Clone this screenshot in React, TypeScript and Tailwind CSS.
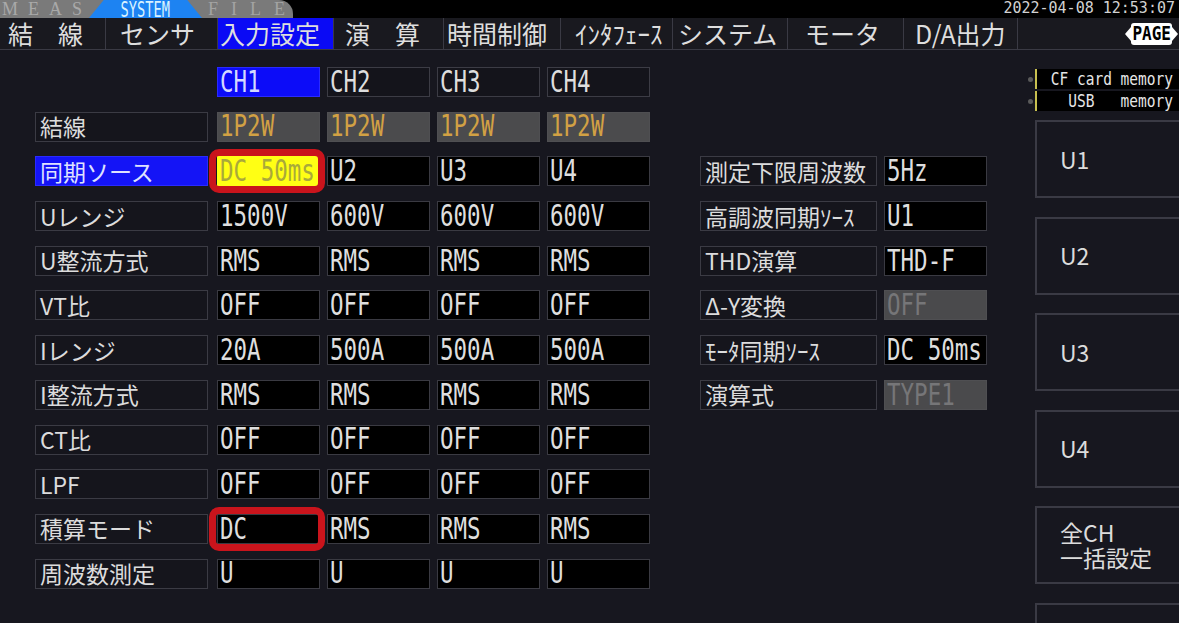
import React from "react";

const MONO = "font-['DejaVu_Sans_Mono','Noto_Sans_CJK_JP',monospace]";
const JP = "font-['Noto_Sans_CJK_JP','Noto_Sans',sans-serif]";

type Cell = { text: string; tone?: "black" | "fixed" | "dim" | "yellow" | "blue" | "head"; ring?: boolean };
type Row = { label: string; selected?: boolean; cells: Cell[]; side?: { label: string; value: Cell } };

const menu = [
  { text: "結　線", cls: "w-[106px] pl-[8px]" },
  { text: "センサ", cls: "w-[112px] pl-[14px]" },
  { text: "入力設定", cls: "w-[116px] pl-[2px] bg-[#0a0af5] text-[#d6dcff]" },
  { text: "演　算", cls: "w-[110px] pl-[11px]" },
  { text: "時間制御", cls: "w-[117px] pl-[3px]" },
  { text: "ｲﾝﾀﾌｪｰｽ", cls: "w-[112px] pl-[14px]" },
  { text: "システム", cls: "w-[115px] pl-[5px]" },
  { text: "モータ", cls: "w-[116px] pl-[17px]" },
  { text: "D/A出力", cls: "w-[114px] pl-[11px]" },
];

const four = (t: string, tone: Cell["tone"] = "black"): Cell[] => [
  { text: t, tone },
  { text: t, tone },
  { text: t, tone },
  { text: t, tone },
];

const rows: Row[] = [
  { label: "結線", cells: four("1P2W", "fixed") },
  {
    label: "同期ソース",
    selected: true,
    cells: [{ text: "DC 50ms", tone: "yellow", ring: true }, { text: "U2" }, { text: "U3" }, { text: "U4" }],
    side: { label: "測定下限周波数", value: { text: "5Hz" } },
  },
  {
    label: "Uレンジ",
    cells: [{ text: "1500V" }, { text: "600V" }, { text: "600V" }, { text: "600V" }],
    side: { label: "高調波同期ｿｰｽ", value: { text: "U1" } },
  },
  { label: "U整流方式", cells: four("RMS"), side: { label: "THD演算", value: { text: "THD-F" } } },
  { label: "VT比", cells: four("OFF"), side: { label: "Δ-Y変換", value: { text: "OFF", tone: "dim" } } },
  {
    label: "Iレンジ",
    cells: [{ text: "20A" }, { text: "500A" }, { text: "500A" }, { text: "500A" }],
    side: { label: "ﾓｰﾀ同期ｿｰｽ", value: { text: "DC 50ms" } },
  },
  { label: "I整流方式", cells: four("RMS"), side: { label: "演算式", value: { text: "TYPE1", tone: "dim" } } },
  { label: "CT比", cells: four("OFF") },
  { label: "LPF", cells: four("OFF") },
  { label: "積算モード", cells: [{ text: "DC", ring: true }, { text: "RMS" }, { text: "RMS" }, { text: "RMS" }] },
  { label: "周波数測定", cells: four("U") },
];

const toneCls: Record<string, string> = {
  black: "bg-black border-[#3a3a42] text-[#dedede]",
  fixed: "bg-[#4b4b4d] border-[#4f4f52] text-[#d2a144]",
  dim: "bg-[#4a4a4c] border-[#4f4f52] text-[#767678]",
  yellow: "bg-[#ffff14] border-[#ffff14] text-[#a9a93a]",
  blue: "bg-[#0c0cf8] border-[#2a2aff] text-[#d4d8ff]",
  head: "bg-[#14141b] border-[#3c3c45] text-[#dedede]",
};

function Val({ text }: { text: string }) {
  return (
    <span className={`${MONO} inline-block scale-y-[1.3] whitespace-pre text-[22.5px] leading-none`}>{text}</span>
  );
}

function ValueCell({ cell }: { cell: Cell }) {
  return (
    <div className="relative w-[103px] h-[30px] shrink-0">
      <div className={`w-full h-full border flex items-center pl-[2px] ${toneCls[cell.tone ?? "black"]}`}>
        <Val text={cell.text} />
      </div>
      {cell.ring && (
        <div className="absolute -left-[8px] -right-[5px] -top-[7px] -bottom-[7px] border-[7px] border-[#c9141c] rounded-[10px]" />
      )}
    </div>
  );
}

function Label({ text, selected, wide }: { text: string; selected?: boolean; wide?: boolean }) {
  return (
    <div
      className={`${wide ? "w-[177px]" : "w-[173px]"} h-[30px] shrink-0 border flex items-center pl-[4px] ${JP} text-[23px] leading-none whitespace-nowrap ${
        selected ? "bg-[#1414f6] border-[#2a2aff] text-[#dfe2ff]" : "bg-[#15151c] border-[#3b3b44] text-[#dcdcdc]"
      }`}
    >
      {text}
    </div>
  );
}

function SideButton({ children }: { children: React.ReactNode }) {
  return (
    <div
      className={`w-[160px] h-[78px] shrink-0 border-2 border-[#3a3a44] bg-[#17171f] flex items-center pl-[23px] ${JP} text-[23px] leading-[25px] text-[#dcdcdc]`}
    >
      {children}
    </div>
  );
}

export default function App() {
  return (
    <div className="w-[1179px] h-[623px] overflow-hidden bg-[#17171f] text-[#dcdcdc]">
      {/* top strip */}
      <div className="h-[18px] bg-black flex items-stretch justify-between overflow-hidden">
        <div className="w-[293px] h-[18px] bg-[#7a7a7a] rounded-tr-[14px] flex items-stretch overflow-hidden">
          <div className="w-[89px] flex items-center pl-[2px] font-['Liberation_Serif',serif] text-[18px] leading-[18px] tracking-[10px] text-[#a9a9a9] overflow-hidden">
            MEAS
          </div>
          <div className="w-[113px] bg-[#1d83f2] [clip-path:polygon(13%_0,87%_0,100%_100%,0_100%)] flex items-center justify-center">
            <span className={`${MONO} inline-block scale-x-[0.72] scale-y-[1.1] text-[19px] leading-[18px] text-[#d8f2ff]`}>
              SYSTEM
            </span>
          </div>
          <div className="flex-1 flex items-center pl-[6px] font-['Liberation_Serif',serif] text-[18px] leading-[18px] tracking-[13px] text-[#a3a3a3] overflow-hidden">
            FILE
          </div>
        </div>
        <div className={`${MONO} text-[15px] leading-[16px] text-[#d2d2d2] pr-[4px]`}>2022-04-08 12:53:07</div>
      </div>

      {/* menu */}
      <div className="h-[32px] flex items-stretch border-b border-[#3a3a44] bg-[#19191f]">
        {menu.map((m) => (
          <div
            key={m.text}
            className={`${m.cls} flex items-center border-r border-[#3a3a44] ${JP} text-[25px] leading-none whitespace-pre text-[#dedede]`}
          >
            {m.text}
          </div>
        ))}
        <div className="flex-1 flex items-center justify-end pr-[1px]">
          <div className="w-0 h-0 border-y-[7px] border-y-transparent border-r-[6px] border-r-white" />
          <div className="h-[22px] bg-white text-black rounded-[3px] flex items-center px-[1px]">
            <span className={`${MONO} inline-block scale-y-[1.25] font-bold text-[16px] leading-none`}>PAGE</span>
          </div>
          <div className="w-0 h-0 border-y-[7px] border-y-transparent border-l-[6px] border-l-white" />
        </div>
      </div>

      <div className="flex">
        {/* settings grid */}
        <div className="w-[1028px] shrink-0 pt-[17px] pl-[35px] flex flex-col gap-[14.7px]">
          <div className="flex items-center">
            <div className="w-[173px] shrink-0" />
            <div className="flex gap-[7px] ml-[9px]">
              <ValueCell cell={{ text: "CH1", tone: "blue" }} />
              <ValueCell cell={{ text: "CH2", tone: "head" }} />
              <ValueCell cell={{ text: "CH3", tone: "head" }} />
              <ValueCell cell={{ text: "CH4", tone: "head" }} />
            </div>
          </div>
          {rows.map((r) => (
            <div key={r.label} className="flex items-center">
              <Label text={r.label} selected={r.selected} />
              <div className="flex gap-[7px] ml-[9px]">
                {r.cells.map((c, i) => (
                  <ValueCell key={i} cell={c} />
                ))}
              </div>
              {r.side && (
                <div className="flex gap-[7px] ml-[50px]">
                  <Label text={r.side.label} wide />
                  <ValueCell cell={r.side.value} />
                </div>
              )}
            </div>
          ))}
        </div>

        {/* right column */}
        <div className="w-[151px] shrink-0 flex flex-col pt-[19px]">
          <div className="flex flex-col gap-[2px]">
            {["CF card memory", "  USB   memory"].map((t) => (
              <div key={t} className="flex items-center h-[20px]">
                <div className="w-[5px] h-[5px] rounded-full bg-[#5a5a5a]" />
                <div className="w-[2px] h-full bg-[#c8c050] ml-[2px]" />
                <div
                  className={`flex-1 h-full bg-black flex items-center justify-end pr-[6px] ${MONO} text-[14.5px] leading-none whitespace-pre text-[#e6e6e6]`}
                >
                  <span className="inline-block scale-y-[1.2]">{t}</span>
                </div>
              </div>
            ))}
          </div>
          <div className="flex flex-col gap-[18.5px] mt-[9px] pl-[7px]">
            <SideButton>U1</SideButton>
            <SideButton>U2</SideButton>
            <SideButton>U3</SideButton>
            <SideButton>U4</SideButton>
            <SideButton>
              <div>
                全CH
                <br />
                一括設定
              </div>
            </SideButton>
            <SideButton>{""}</SideButton>
          </div>
        </div>
      </div>
    </div>
  );
}
